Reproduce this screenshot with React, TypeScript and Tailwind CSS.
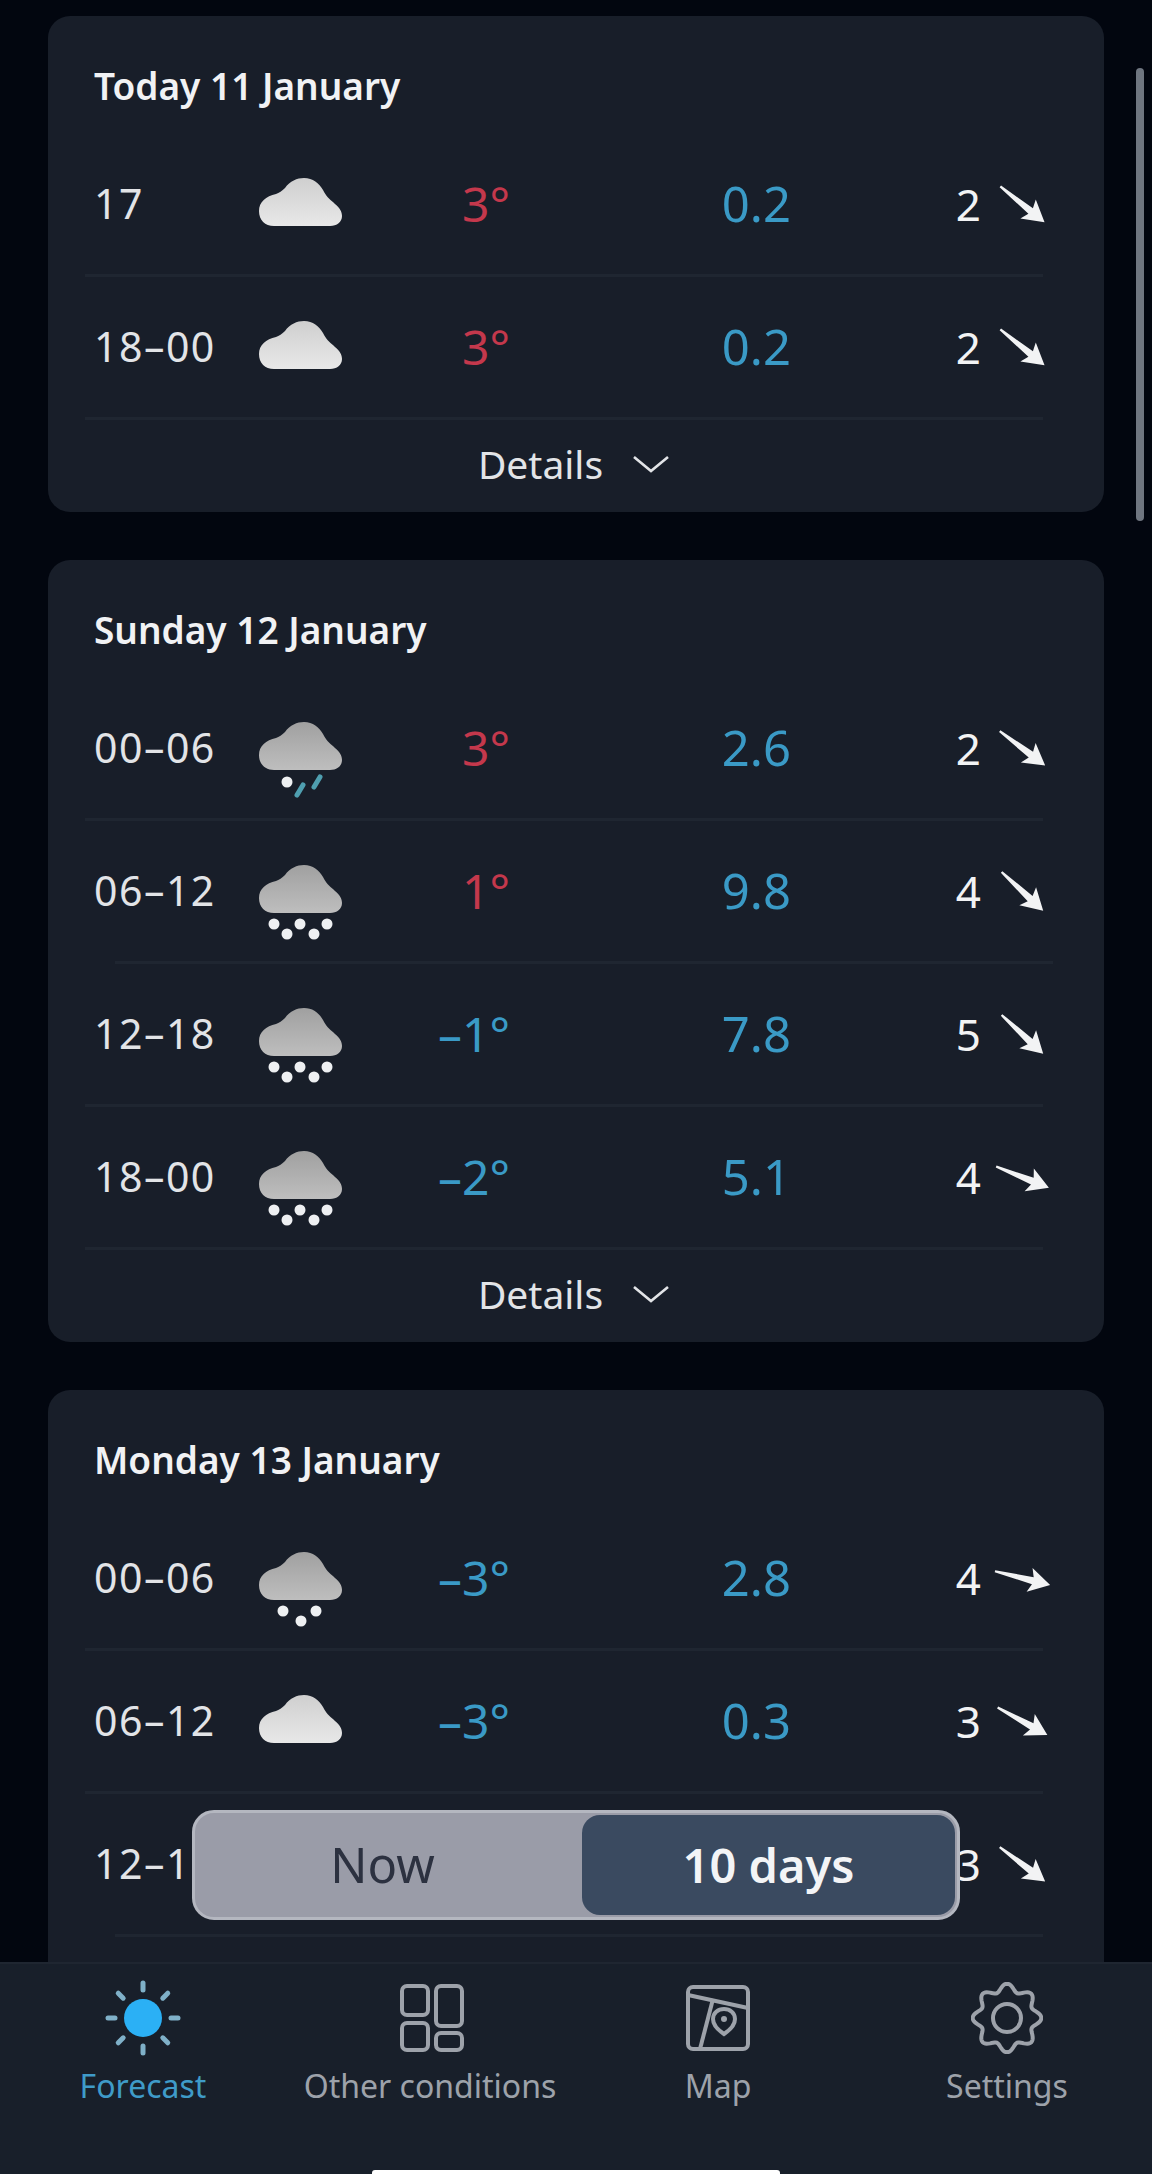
type Sky = "light" | "sleet" | "snow" | "lightsnow" | "none";

type Row = {
  time: string;
  sky: Sky;
  temp?: string;
  warm?: boolean;
  rain?: string;
  wind: string;
  angle: number;
  line?: string;
};

const today: Row[] = [
  { time: "17", sky: "light", temp: "3°", warm: true, rain: "0.2", wind: "2", angle: 39 },
  { time: "18–00", sky: "light", temp: "3°", warm: true, rain: "0.2", wind: "2", angle: 39 },
];

const sunday: Row[] = [
  { time: "00–06", sky: "sleet", temp: "3°", warm: true, rain: "2.6", wind: "2", angle: 37 },
  { time: "06–12", sky: "snow", temp: "1°", warm: true, rain: "9.8", wind: "4", angle: 43, line: "ml-[30px] mr-[-10px]" },
  { time: "12–18", sky: "snow", temp: "–1°", rain: "7.8", wind: "5", angle: 43 },
  { time: "18–00", sky: "snow", temp: "–2°", rain: "5.1", wind: "4", angle: 22 },
];

const monday: Row[] = [
  { time: "00–06", sky: "lightsnow", temp: "–3°", rain: "2.8", wind: "4", angle: 14 },
  { time: "06–12", sky: "light", temp: "–3°", rain: "0.3", wind: "3", angle: 29 },
  { time: "12–18", sky: "none", wind: "3", angle: 37, line: "ml-[30px]" },
];

const cloudPath =
  "M15 48C6 48 0 42 0 33C0 24 7 18 17 16C20 15 23 13 26 10C31 3 38 0 45 0C54 0 60 5 64 12C68 20 72 22 76 26C81 30 83 34 83 38C83 44 78 48 71 48Z";

function WeatherIcon({ sky }: { sky: Sky }) {
  if (sky === "none") return <div className="h-[84px] w-[83px]" />;
  const isLight = sky === "light";
  return (
    <svg width="83" height="84" viewBox="0 0 83 84" className="block">
      <defs>
        <linearGradient id="cloudLight" x1="0" y1="0" x2="0" y2="1">
          <stop offset="0" stopColor="#cfcfcf" />
          <stop offset="1" stopColor="#e8e8e8" />
        </linearGradient>
        <linearGradient id="cloudGrey" x1="0" y1="0" x2="0" y2="1">
          <stop offset="0" stopColor="#a0a0a0" />
          <stop offset="1" stopColor="#bebebe" />
        </linearGradient>
      </defs>
      <path d={cloudPath} fill={isLight ? "url(#cloudLight)" : "url(#cloudGrey)"} />
      {sky === "snow" &&
        [
          [15, 59],
          [28, 69],
          [41, 59],
          [55, 69],
          [68, 59],
        ].map(([cx, cy]) => <circle key={cx} cx={cx} cy={cy} r="5.5" fill="#eef0f2" />)}
      {sky === "lightsnow" &&
        [
          [24, 59],
          [42, 69],
          [57, 59],
        ].map(([cx, cy]) => <circle key={cx} cx={cx} cy={cy} r="5.5" fill="#eef0f2" />)}
      {sky === "sleet" && (
        <>
          <circle cx="28" cy="60" r="5.5" fill="#eef0f2" />
          <path d="M38 73L44 63M55 65L61 55" stroke="#4f9fb0" strokeWidth="5" strokeLinecap="round" />
        </>
      )}
    </svg>
  );
}

function WindArrow({ angle }: { angle: number }) {
  return (
    <svg width="58" height="58" viewBox="0 0 52 52" className="mr-[-8px] block">
      <g transform={`rotate(${angle} 26 26)`}>
        <path d="M1 25L36 22.8L33 15L52 26L33 37L36 29.2L1 27Z" fill="#f2f3f4" />
      </g>
    </svg>
  );
}

function ForecastRow({ row }: { row: Row }) {
  return (
    <div>
      <div className="grid h-[140px] grid-cols-[165px_83px_168px_281px_1fr] items-center pl-[9px]">
        <span className="text-[41px] tracking-[1.5px] text-[#e2e4e7]">{row.time}</span>
        <div className="pt-[32px]">
          <WeatherIcon sky={row.sky} />
        </div>
        <span className={`text-right text-[48px] ${row.warm ? "text-[#c4384c]" : "text-[#3a9ac6]"}`}>{row.temp}</span>
        <span className="text-right text-[49px] text-[#3a9ac6]">{row.rain}</span>
        <div className="flex items-center justify-end gap-[12px]">
          <span className="text-[44px] text-[#f2f3f4]">{row.wind}</span>
          <WindArrow angle={row.angle} />
        </div>
      </div>
      <div className={`h-[3px] bg-[#1f2631] ${row.line ?? ""}`} />
    </div>
  );
}

function DayCard({ title, rows, last = false }: { title: string; rows: Row[]; last?: boolean }) {
  return (
    <section className={`rounded-[22px] bg-[#181e29] pl-[37px] pr-[61px] ${last ? "flex-1 rounded-b-none" : "shrink-0"}`}>
      <h2 className="flex h-[118px] items-center pl-[9px] pt-[22px] text-[37px] font-semibold text-[#f1f2f4]">{title}</h2>
      {rows.map((row) => (
        <ForecastRow key={row.time} row={row} />
      ))}
      {!last && (
        <div className="flex h-[92px] items-center justify-center gap-[29px] pb-[4px] pl-[20px]">
          <span className="text-[39px] text-[#e2e4e7]">Details</span>
          <svg width="38" height="20" viewBox="0 0 38 20" fill="none" stroke="#e2e4e7" strokeWidth="2.6">
            <path d="M2 3L19 17L36 3" />
          </svg>
        </div>
      )}
    </section>
  );
}

function gearPath() {
  const pts: string[] = [];
  for (let i = 0; i < 160; i++) {
    const t = (i / 160) * Math.PI * 2;
    const r = 30.5 + 3.8 * Math.cos(8 * t);
    pts.push(`${(36 + r * Math.sin(t)).toFixed(2)} ${(36 - r * Math.cos(t)).toFixed(2)}`);
  }
  return `M${pts.join("L")}Z`;
}

function SunIcon() {
  const rays = [0, 45, 90, 135, 180, 225, 270, 315];
  return (
    <svg width="80" height="80" viewBox="0 0 80 80">
      <circle cx="40" cy="40" r="19" fill="#2bb0f5" />
      {rays.map((a) => (
        <path key={a} d="M40 5V12" transform={`rotate(${a} 40 40)`} stroke="#7fb0c8" strokeWidth="5" strokeLinecap="round" />
      ))}
    </svg>
  );
}

function GridIcon() {
  return (
    <svg width="64" height="68" viewBox="0 0 64 68" fill="none" stroke="#9da2aa" strokeWidth="4" className="ml-[3px]">
      <rect x="2" y="2" width="26" height="29" rx="5" />
      <rect x="36" y="2" width="26" height="40" rx="5" />
      <rect x="2" y="39" width="26" height="27" rx="5" />
      <rect x="36" y="49" width="26" height="17" rx="5" />
    </svg>
  );
}

function MapIcon() {
  return (
    <svg width="68" height="70" viewBox="0 0 68 70" fill="none" stroke="#9da2aa" strokeWidth="4">
      <rect x="4" y="4" width="60" height="62" rx="5" />
      <path d="M4 12L64 25" />
      <path d="M29 16L16 66" />
      <path d="M40 51C34 47 29 42 29 36C29 30 34 26 40 26C46 26 51 30 51 36C51 42 46 47 40 51Z" />
      <circle cx="40" cy="36" r="3" fill="#9da2aa" stroke="none" />
    </svg>
  );
}

function GearIcon() {
  return (
    <svg width="72" height="72" viewBox="0 0 72 72" fill="none" stroke="#9da2aa" strokeWidth="4">
      <path d={gearPath()} />
      <circle cx="36" cy="36" r="14" />
    </svg>
  );
}

function NavItem({ label, active, children }: { label: string; active?: boolean; children: React.ReactNode }) {
  return (
    <div className="flex h-[128px] flex-col items-center justify-between">
      <div className="flex h-[80px] items-center justify-center">{children}</div>
      <span className={`whitespace-nowrap text-[32px] leading-[40px] ${active ? "text-[#3f9bc8]" : "text-[#9da2aa]"}`}>{label}</span>
    </div>
  );
}

export default function App() {
  return (
    <div className="relative flex h-[2174px] w-[1152px] flex-col overflow-hidden bg-[#02060f] font-['Noto_Sans',sans-serif]">
      <main className="flex h-[1962px] flex-col gap-[48px] overflow-hidden pl-[48px] pr-[48px] pt-[16px]">
        <DayCard title="Today 11 January" rows={today} />
        <DayCard title="Sunday 12 January" rows={sunday} />
        <DayCard title="Monday 13 January" rows={monday} last />
      </main>

      <nav className="relative h-[212px] border-t-2 border-[#1f2631] bg-[#181f2a]">
        <div className="grid grid-cols-[286px_288px_288px_290px] pt-[14px]">
          <NavItem label="Forecast" active>
            <SunIcon />
          </NavItem>
          <NavItem label="Other conditions">
            <GridIcon />
          </NavItem>
          <NavItem label="Map">
            <MapIcon />
          </NavItem>
          <NavItem label="Settings">
            <GearIcon />
          </NavItem>
        </div>
        <div className="absolute bottom-0 left-[372px] h-[4px] w-[408px] rounded-t-[3px] bg-white" />
      </nav>

      <div className="absolute left-[1136px] top-[68px] h-[453px] w-[8px] rounded-full bg-[#6f7680]" />

      <div className="absolute left-[192px] top-[1810px] flex h-[110px] w-[768px] items-stretch rounded-[22px] border-[3px] border-[#b4b7c0] bg-[#9a9ca8] p-[2px]">
        <div className="flex w-[385px] items-center justify-center pr-[14px] text-[49px] text-[#2c3140]">Now</div>
        <div className="flex flex-1 items-center justify-center rounded-[18px] bg-[#3a4a60] text-[47px] font-semibold text-[#f3f4f6]">
          10 days
        </div>
      </div>
    </div>
  );
}
